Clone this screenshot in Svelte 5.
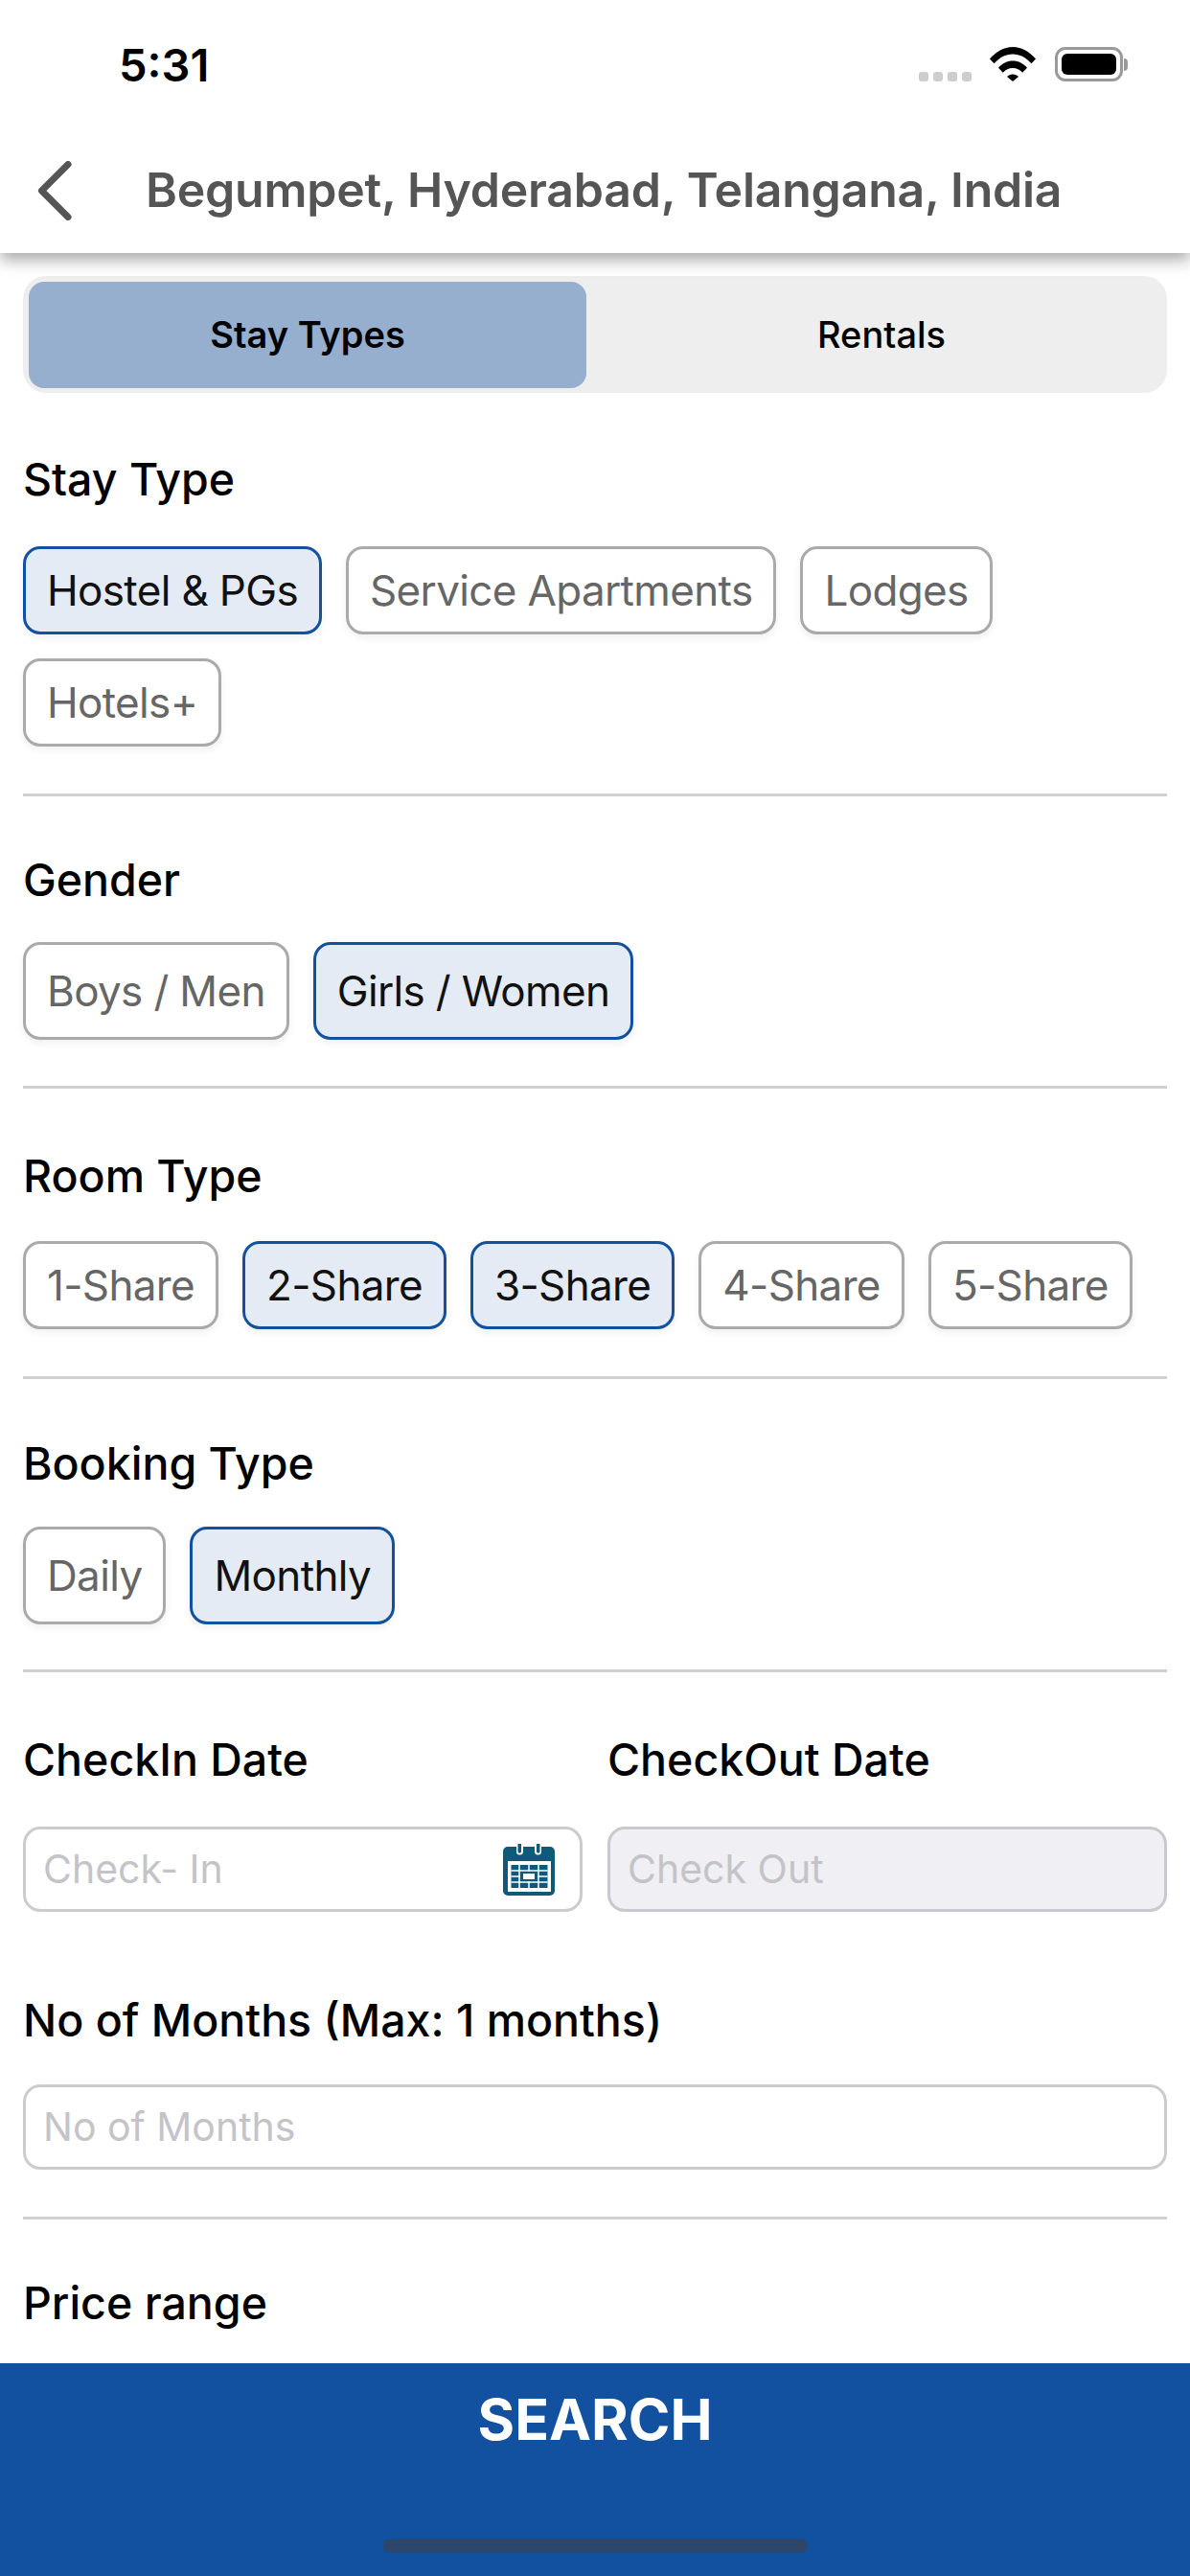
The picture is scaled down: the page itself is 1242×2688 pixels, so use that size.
<script lang="ts">
  type Chip = { label: string; on?: boolean };

  const stayTypes: Chip[] = [
    { label: 'Hostel & PGs', on: true },
    { label: 'Service Apartments' },
    { label: 'Lodges' },
    { label: 'Hotels+' },
  ];
  const genders: Chip[] = [{ label: 'Boys / Men' }, { label: 'Girls / Women', on: true }];
  const roomTypes: Chip[] = [
    { label: '1-Share' },
    { label: '2-Share', on: true },
    { label: '3-Share', on: true },
    { label: '4-Share' },
    { label: '5-Share' },
  ];
  const bookingTypes: Chip[] = [{ label: 'Daily' }, { label: 'Monthly', on: true }];
</script>

{#snippet chips(items: Chip[], tall: boolean)}
  <div class="chips" class:tall>
    {#each items as chip}
      <button type="button" class="chip" class:on={chip.on}>{chip.label}</button>
    {/each}
  </div>
{/snippet}

<div class="screen">
  <header class="top">
    <div class="status">
      <span class="time">5:31</span>
      <div class="status-icons">
        <div class="signal"><i></i><i></i><i></i><i></i></div>
        <svg class="wifi" viewBox="0 0 48 36" width="48" height="36">
          <path d="M0 12.500C6.500 5 14.500 0 24 0s17.500 5 24 12.500l-4.500 4.800C38 11 31.500 7.400 24 7.400S10 11 4.500 17.300z" />
          <path d="M9 21.800C13 17.300 18 14.600 24 14.600s11 2.700 15 7.200l-4.800 4.900C31.500 23.700 28 22 24 22s-7.500 1.700-10.200 4.700z" />
          <path d="M18 31c1.500-1.700 3.500-2.600 6-2.600s4.500.9 6 2.600l-6 5z" />
        </svg>
        <div class="battery"><div class="battery-fill"></div></div>
        <div class="battery-nub"></div>
      </div>
    </div>
    <div class="nav">
      <svg class="back" viewBox="0 0 44 62" width="44" height="62">
        <path d="M35 3.500 7.500 31 35 58.500" fill="none" stroke="#555" stroke-width="7" stroke-linecap="round" stroke-linejoin="round" />
      </svg>
      <h1>Begumpet, Hyderabad, Telangana, India</h1>
    </div>
  </header>

  <main class="content">
    <div class="tabs">
      <button type="button" class="tab active">Stay Types</button>
      <button type="button" class="tab">Rentals</button>
    </div>

    <section class="stay">
      <h2>Stay Type</h2>
      {@render chips(stayTypes, false)}
    </section>
    <section class="gender">
      <h2>Gender</h2>
      {@render chips(genders, true)}
    </section>
    <section class="room">
      <h2>Room Type</h2>
      {@render chips(roomTypes, false)}
    </section>
    <section class="booking">
      <h2>Booking Type</h2>
      {@render chips(bookingTypes, true)}
    </section>

    <section class="dates">
      <div class="date-col">
        <h2>CheckIn Date</h2>
        <div class="field">
          <span>Check- In</span>
          <svg class="calendar" viewBox="0 0 54 54" width="54" height="54">
            <path fill="#0e5a78" d="M5 3h9v5a3.500 3.500 0 0 0 7 0V3h12v5a3.500 3.500 0 0 0 7 0V3h9a5 5 0 0 1 5 5v41a5 5 0 0 1-5 5H5a5 5 0 0 1-5-5V8a5 5 0 0 1 5-5z" />
            <path fill="#0e5a78" d="M15.500 0h3.500v8a1.750 1.750 0 0 1-3.500 0zM35 0h3.500v8a1.750 1.750 0 0 1-3.500 0z" />
            <rect x="5" y="18" width="45" height="32" fill="#fff" />
            <rect x="8.500" y="22" width="38" height="24" fill="#0e5a78" />
            <path stroke="#fff" stroke-width="1.500" d="M8.500 28h38M8.500 34h38M8.500 40h38M17 22v24M27 22v24M37 22v24" />
            <rect x="18" y="29" width="18" height="10" fill="#0e5a78" />
            <rect x="21" y="31" width="12" height="6" fill="#fff" />
          </svg>
        </div>
      </div>
      <div class="date-col">
        <h2>CheckOut Date</h2>
        <div class="field disabled"><span>Check Out</span></div>
      </div>
    </section>

    <section class="months">
      <h2>No of Months (Max: 1 months)</h2>
      <div class="field"><span>No of Months</span></div>
    </section>

    <section class="price">
      <h2>Price range</h2>
    </section>
  </main>

  <footer class="search">
    <button type="button">SEARCH</button>
    <div class="home"></div>
  </footer>
</div>

<style>
  :global(body) {
    margin: 0;
    background: #fff;
    font-family: Inter, 'Liberation Sans', sans-serif;
  }

  .screen {
    display: flex;
    flex-direction: column;
    height: 2688px;
    overflow: hidden;
    background: #fff;
  }

  .top {
    position: relative;
    z-index: 1;
    height: 264px;
    flex: none;
    background: #fff;
    box-shadow: 0 7px 16px rgba(0, 0, 0, 0.35);
  }

  .status {
    display: flex;
    align-items: flex-start;
    justify-content: space-between;
    height: 132px;
    padding: 0 65px 0 124px;
  }

  .time {
    margin-top: 40px;
    font-size: 47px;
    line-height: 56px;
    font-weight: 600;
    color: #000;
  }

  .status-icons {
    display: flex;
    align-items: flex-end;
    margin-top: 49px;
  }

  .signal {
    display: flex;
    gap: 5px;
    margin-right: 19px;
  }

  .signal i {
    width: 10px;
    height: 10px;
    border-radius: 3px;
    background: #cdcdcd;
  }

  .wifi {
    display: block;
    margin-right: 20px;
  }

  .wifi path {
    fill: #000;
  }

  .battery {
    box-sizing: border-box;
    width: 71px;
    height: 36px;
    padding: 4px;
    border: 3px solid #999;
    border-radius: 11px;
  }

  .battery-fill {
    height: 100%;
    border-radius: 6px;
    background: #000;
  }

  .battery-nub {
    width: 4px;
    height: 13px;
    margin: 0 0 11px 1px;
    border-radius: 0 4px 4px 0;
    background: #999;
  }

  .nav {
    display: flex;
    align-items: center;
    height: 132px;
    padding-left: 36px;
  }

  .back {
    flex: none;
    margin: 2px 72px 0 0;
  }

  h1 {
    margin: 0;
    font-size: 50px;
    line-height: 60px;
    font-weight: 600;
    letter-spacing: -0.23px;
    color: #555;
    white-space: nowrap;
  }

  .content {
    flex: 1;
    min-height: 0;
    padding: 24px 24px 0;
  }

  .tabs {
    display: flex;
    box-sizing: border-box;
    height: 122px;
    padding: 6px 0 5px 6px;
    border-radius: 24px;
    background: #eee;
  }

  .tab {
    flex: 1;
    padding: 0 0 2px 10px;
    border: none;
    border-radius: 16px;
    background: transparent;
    font: 500 38px/44px Inter, sans-serif;
    color: #000;
  }

  .tab.active {
    flex: 0 0 582px;
    padding: 0 0 2px;
    background: #97afcf;
    font-weight: 600;
  }

  section {
    box-sizing: border-box;
    border-bottom: 3px solid #cfcfd4;
  }

  h2 {
    margin: 0;
    font-size: 46.500px;
    line-height: 54px;
    font-weight: 500;
    color: #000;
  }

  .stay {
    height: 421px;
    padding-top: 63px;
  }

  .gender {
    height: 305px;
    padding-top: 60px;
  }

  .room {
    height: 303px;
    padding-top: 64px;
  }

  .booking {
    height: 306px;
    padding-top: 61px;
  }

  .chips {
    display: flex;
    flex-wrap: wrap;
    gap: 25px;
  }

  .stay .chips {
    margin-top: 43px;
  }

  .gender .chips {
    margin-top: 38px;
  }

  .room .chips {
    margin-top: 41px;
  }

  .booking .chips {
    margin-top: 39px;
  }

  .chip {
    box-sizing: border-box;
    height: 92px;
    padding: 0 22px;
    border: 3px solid #aaa;
    border-radius: 18px;
    background: #fff;
    box-shadow: 0 4px 8px rgba(0, 0, 0, 0.06);
    font: 400 44px/52px Inter, sans-serif;
    letter-spacing: -0.65px;
    color: #666;
    white-space: nowrap;
  }

  .chip.on {
    border-color: #11519f;
    background: #e5ebf4;
    color: #111;
  }

  .chips.tall .chip {
    height: 102px;
  }

  .dates {
    display: flex;
    gap: 26px;
    height: 250px;
    border-bottom: none;
    padding-top: 64px;
  }

  .date-col {
    flex: 1;
  }

  .field {
    display: flex;
    align-items: center;
    justify-content: space-between;
    box-sizing: border-box;
    height: 89px;
    margin-top: 43px;
    padding: 0 26px 2px 18px;
    border: 3px solid #ccc;
    border-radius: 18px;
    font-size: 41px;
    color: #c4c4c8;
  }

  .field.disabled {
    border-color: #c8c8ce;
    background: #efeff4;
  }

  .calendar {
    display: block;
    margin-top: 2px;
  }

  .months {
    height: 321px;
    padding-top: 86px;
  }

  .months .field {
    margin-top: 40px;
  }

  .price {
    border-bottom: none;
    padding-top: 60px;
  }

  .search {
    position: relative;
    height: 222px;
    flex: none;
    background: #11519f;
    text-align: center;
  }

  .search button {
    display: block;
    width: 100%;
    padding: 24px 0 0;
    border: none;
    background: transparent;
    font: 700 59px/70px Inter, sans-serif;
    color: #fff;
  }

  .home {
    position: absolute;
    left: 400px;
    bottom: 24px;
    width: 443px;
    height: 15px;
    border-radius: 8px;
    background: #2d4669;
  }
</style>
